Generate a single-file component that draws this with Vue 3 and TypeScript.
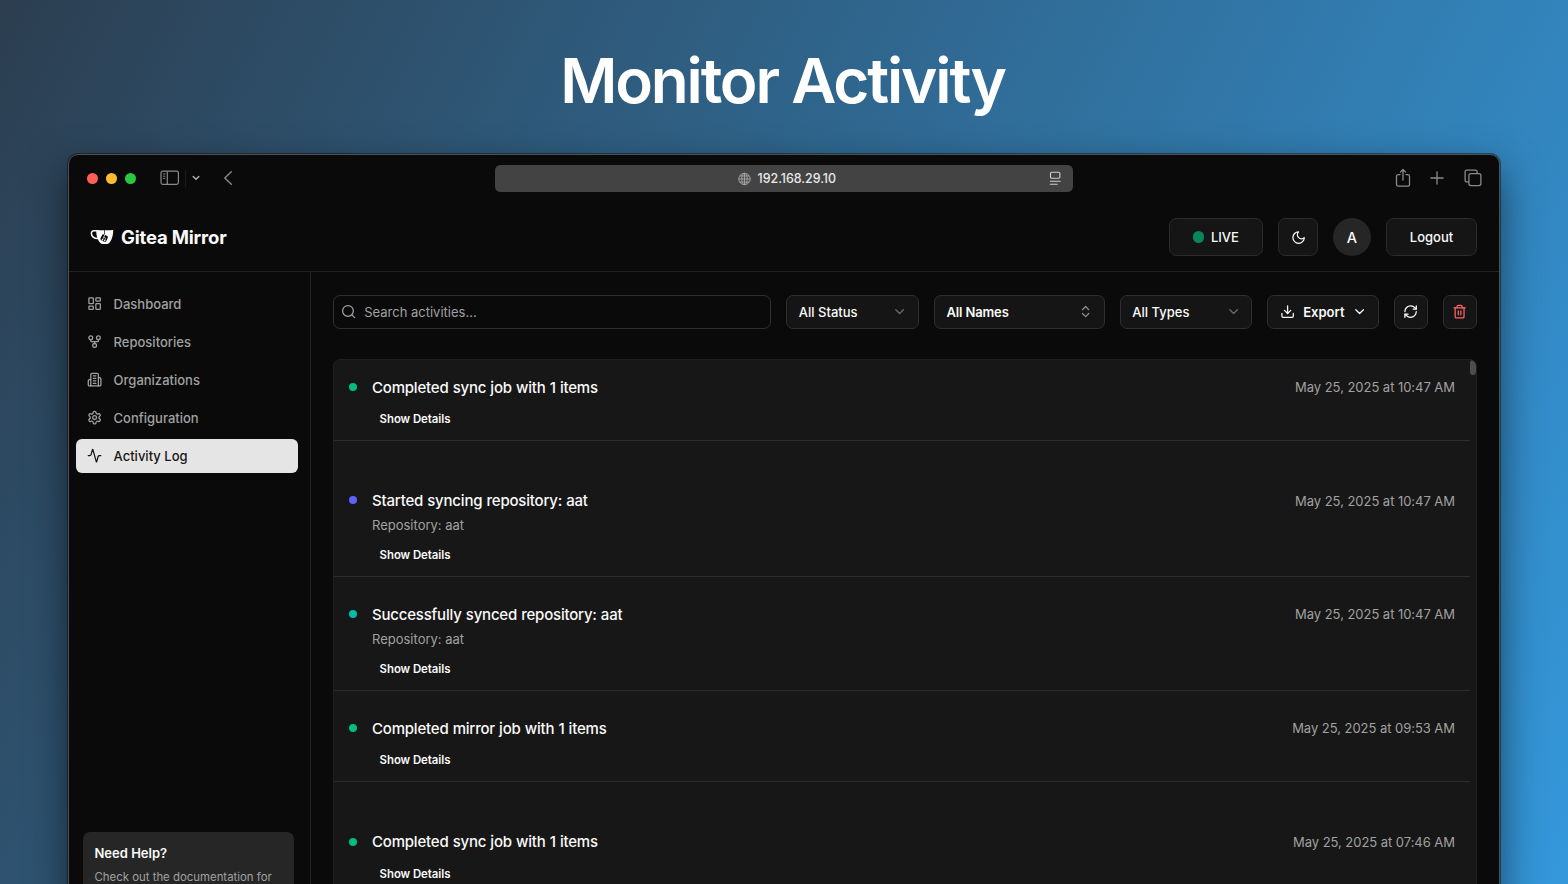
<script setup lang="ts">
interface NavItem {
  label: string
  icon: string
  active?: boolean
}

interface Activity {
  title: string
  repo?: string
  time: string
  tone: 'green' | 'indigo' | 'teal'
}

const icons: Record<string, string> = {
  dashboard:
    '<rect width="7" height="9" x="3" y="3" rx="1"/><rect width="7" height="5" x="14" y="3" rx="1"/><rect width="7" height="9" x="14" y="12" rx="1"/><rect width="7" height="5" x="3" y="16" rx="1"/>',
  fork:
    '<circle cx="12" cy="18" r="3"/><circle cx="6" cy="6" r="3"/><circle cx="18" cy="6" r="3"/><path d="M18 9v2c0 .6-.4 1-1 1H7c-.6 0-1-.4-1-1V9"/><path d="M12 12v3"/>',
  building:
    '<path d="M6 22V4a2 2 0 0 1 2-2h8a2 2 0 0 1 2 2v18Z"/><path d="M6 12H4a2 2 0 0 0-2 2v6a2 2 0 0 0 2 2h2"/><path d="M18 9h2a2 2 0 0 1 2 2v9a2 2 0 0 1-2 2h-2"/><path d="M10 6h4M10 10h4M10 14h4M10 18h4"/>',
  settings:
    '<path d="M12.22 2h-.44a2 2 0 0 0-2 2v.18a2 2 0 0 1-1 1.73l-.43.25a2 2 0 0 1-2 0l-.15-.08a2 2 0 0 0-2.73.73l-.22.38a2 2 0 0 0 .73 2.73l.15.1a2 2 0 0 1 1 1.72v.51a2 2 0 0 1-1 1.74l-.15.09a2 2 0 0 0-.73 2.73l.22.38a2 2 0 0 0 2.73.73l.15-.08a2 2 0 0 1 2 0l.43.25a2 2 0 0 1 1 1.73V20a2 2 0 0 0 2 2h.44a2 2 0 0 0 2-2v-.18a2 2 0 0 1 1-1.73l.43-.25a2 2 0 0 1 2 0l.15.08a2 2 0 0 0 2.73-.73l.22-.39a2 2 0 0 0-.73-2.73l-.15-.08a2 2 0 0 1-1-1.74v-.5a2 2 0 0 1 1-1.74l.15-.09a2 2 0 0 0 .73-2.73l-.22-.38a2 2 0 0 0-2.73-.73l-.15.08a2 2 0 0 1-2 0l-.43-.25a2 2 0 0 1-1-1.73V4a2 2 0 0 0-2-2z"/><circle cx="12" cy="12" r="3"/>',
  activity:
    '<path d="M22 12h-2.48a2 2 0 0 0-1.93 1.46l-2.35 8.36a.25.25 0 0 1-.48 0L9.24 2.18a.25.25 0 0 0-.48 0l-2.35 8.36A2 2 0 0 1 4.49 12H2"/>',
}

const nav: NavItem[] = [
  { label: 'Dashboard', icon: 'dashboard' },
  { label: 'Repositories', icon: 'fork' },
  { label: 'Organizations', icon: 'building' },
  { label: 'Configuration', icon: 'settings' },
  { label: 'Activity Log', icon: 'activity', active: true },
]

const activities: Activity[] = [
  { title: 'Completed sync job with 1 items', time: 'May 25, 2025 at 10:47 AM', tone: 'green' },
  { title: 'Started syncing repository: aat', repo: 'Repository: aat', time: 'May 25, 2025 at 10:47 AM', tone: 'indigo' },
  { title: 'Successfully synced repository: aat', repo: 'Repository: aat', time: 'May 25, 2025 at 10:47 AM', tone: 'teal' },
  { title: 'Completed mirror job with 1 items', time: 'May 25, 2025 at 09:53 AM', tone: 'green' },
  { title: 'Completed sync job with 1 items', time: 'May 25, 2025 at 07:46 AM', tone: 'green' },
]
</script>

<template>
  <div class="stage">
    <h1 class="headline">Monitor Activity</h1>

    <div class="window">
      <div class="chrome">
        <div class="chrome-left">
          <span class="light red"></span>
          <span class="light yellow"></span>
          <span class="light green"></span>
          <svg class="panel-icon" width="20" height="16" viewBox="0 0 20 16" fill="none" stroke="currentColor" stroke-width="1.2">
            <rect x="1" y="1.2" width="17.4" height="13.2" rx="1.8" />
            <path d="M7.3 1.2v13.2" />
            <path d="M2.9 4h2.5M2.9 6.2h2.5M2.9 8.4h2.5" stroke-width="0.9" />
          </svg>
          <span class="chrome-divider"></span>
          <svg class="caret" width="8" height="6" viewBox="0 0 8 6" fill="none" stroke="currentColor" stroke-width="1.4" stroke-linecap="round" stroke-linejoin="round">
            <path d="M1.2 1.5 4 4.2l2.8-2.7" />
          </svg>
          <svg class="back" width="10" height="16" viewBox="0 0 10 16" fill="none" stroke="currentColor" stroke-width="1.4" stroke-linecap="round" stroke-linejoin="round">
            <path d="M8.3 1.8 1.8 8l6.5 6.2" />
          </svg>
        </div>

        <div class="address">
          <span class="address-side"></span>
          <span class="address-text">
            <svg width="13" height="14" viewBox="0 0 13 14" fill="none" stroke="currentColor" stroke-width="0.9">
              <circle cx="6.5" cy="7" r="5.7" />
              <ellipse cx="6.5" cy="7" rx="2.7" ry="5.7" />
              <path d="M6.5 1.3v11.4M.8 7h11.4M1.8 4h9.4M1.8 10h9.4" />
            </svg>
            <span class="host">192.168.29.10</span>
          </span>
          <span class="address-side end">
            <svg width="13" height="15" viewBox="0 0 13 15" fill="none" stroke="currentColor" stroke-width="1.1" stroke-linecap="round">
              <rect x="1.5" y="1.2" width="9.4" height="6" rx="1.2" />
              <path d="M1.4 10.2h9.8M1.4 13.2h6.8" />
            </svg>
          </span>
        </div>

        <div class="chrome-right">
          <svg width="16" height="20" viewBox="0 0 16 20" fill="none" stroke="currentColor" stroke-width="1.3" stroke-linecap="round" stroke-linejoin="round">
            <path d="M5 6.6H3.3A1.8 1.8 0 0 0 1.5 8.4v8A1.8 1.8 0 0 0 3.3 18.2h9.4a1.8 1.8 0 0 0 1.8-1.8v-8a1.8 1.8 0 0 0-1.8-1.8H11" />
            <path d="M8 12V1.6M5.4 4.1 8 1.5l2.6 2.6" />
          </svg>
          <svg width="14" height="14" viewBox="0 0 14 14" fill="none" stroke="currentColor" stroke-width="1.3" stroke-linecap="round">
            <path d="M7 .9v12.2M.9 7h12.2" />
          </svg>
          <svg width="18" height="18" viewBox="0 0 18 18" fill="none" stroke="currentColor" stroke-width="1.3" stroke-linejoin="round">
            <rect x="4.9" y="4.6" width="12" height="12" rx="2" />
            <path d="M4.9 12.8H3a1.9 1.9 0 0 1-1.9-1.9V3A1.9 1.9 0 0 1 3 1.1h8.2A1.9 1.9 0 0 1 13.1 3v1.6" />
          </svg>
        </div>
      </div>

      <header class="topbar">
        <div class="brand">
          <svg class="logo" width="24" height="16" viewBox="0 0 24 16">
            <path d="M7.5 1.7H4.2C2.2 1.7 1.3 2.9 1.4 4.6 1.6 7.5 4 9.4 8 9.5" fill="none" stroke="#fafafa" stroke-width="1.5" />
            <path d="M6.2 .9c5 .4 11.5 .4 17 .1 .1 4.6-1 8.9-3.2 12-1 1.4-2.2 2-3.8 2-2 .1-3.600 0-4.800-.3-1.500-.6-2.500-2.200-3.600-4.600C6.600 7.400 6.200 4.300 6.200 .9Z" fill="#fafafa" />
            <path d="M14.5 1v4.4" stroke="#0a0a0a" stroke-width="0.7" />
            <rect x="11" y="5.9" width="6.3" height="6.3" rx="1.4" transform="rotate(25 14.15 9.05)" fill="#0a0a0a" />
            <path d="M14.9 5.6 12.3 11.4M13.7 8.2c1.9.2 2.1 1.2 1 3.3" fill="none" stroke="#fafafa" stroke-width="0.7" />
            <circle cx="12.5" cy="10.8" r=".75" fill="#fafafa" />
            <circle cx="14.7" cy="11.4" r=".75" fill="#fafafa" />
          </svg>
          <span class="brand-name">Gitea Mirror</span>
        </div>
        <div class="actions">
          <button class="btn live"><span class="live-dot"></span>LIVE</button>
          <button class="btn theme" aria-label="Theme">
            <svg class="icon" viewBox="0 0 24 24"><path d="M12 3a6 6 0 0 0 9 9 9 9 0 1 1-9-9Z" /></svg>
          </button>
          <span class="avatar">A</span>
          <button class="btn logout">Logout</button>
        </div>
      </header>

      <div class="body">
        <aside class="sidebar">
          <nav class="nav">
            <a v-for="item in nav" :key="item.label" class="nav-item" :class="{ active: item.active }">
              <svg class="icon" viewBox="0 0 24 24" v-html="icons[item.icon]"></svg>
              <span>{{ item.label }}</span>
            </a>
          </nav>
          <div class="help">
            <div class="help-title">Need Help?</div>
            <div class="help-text">Check out the documentation for</div>
          </div>
        </aside>

        <main class="main">
          <div class="filters">
            <div class="search">
              <svg class="icon" viewBox="0 0 24 24"><circle cx="11" cy="11" r="8.5" /><path d="m21.5 21.5-4.3-4.3" /></svg>
              <span>Search activities...</span>
            </div>
            <div class="field status">
              <span>All Status</span>
              <svg class="icon faint" viewBox="0 0 24 24"><path d="m6 9 6 6 6-6" /></svg>
            </div>
            <div class="field names">
              <span>All Names</span>
              <svg class="icon dim" viewBox="0 0 24 24"><path d="m7 15 5 5 5-5" /><path d="m7 9 5-5 5 5" /></svg>
            </div>
            <div class="field types">
              <span>All Types</span>
              <svg class="icon faint" viewBox="0 0 24 24"><path d="m6 9 6 6 6-6" /></svg>
            </div>
            <div class="field export">
              <svg class="icon" viewBox="0 0 24 24"><path d="M12 15V3" /><path d="M21 15v4a2 2 0 0 1-2 2H5a2 2 0 0 1-2-2v-4" /><path d="m7 10 5 5 5-5" /></svg>
              <span>Export</span>
              <svg class="icon" viewBox="0 0 24 24"><path d="m6 9 6 6 6-6" /></svg>
            </div>
            <div class="field square">
              <svg class="icon" viewBox="0 0 24 24"><path d="M3 12a9 9 0 0 1 9-9 9.75 9.75 0 0 1 6.74 2.74L21 8" /><path d="M21 3v5h-5" /><path d="M21 12a9 9 0 0 1-9 9 9.75 9.75 0 0 1-6.74-2.74L3 16" /><path d="M8 16H3v5" /></svg>
            </div>
            <div class="field square danger">
              <svg class="icon" viewBox="0 0 24 24"><path d="M3 6h18" /><path d="M19 6v14a2 2 0 0 1-2 2H7a2 2 0 0 1-2-2V6" /><path d="M8 6V4a2 2 0 0 1 2-2h4a2 2 0 0 1 2 2v2" /><path d="M10 11v6M14 11v6" /></svg>
            </div>
          </div>

          <section class="list">
            <div class="slots">
              <div v-for="(a, i) in activities" :key="i" class="slot">
                <article class="row">
                  <span class="dot" :class="a.tone"></span>
                  <div class="row-body">
                    <div class="row-head">
                      <span class="row-title">{{ a.title }}</span>
                      <span class="row-time">{{ a.time }}</span>
                    </div>
                    <div v-if="a.repo" class="row-repo">{{ a.repo }}</div>
                    <button class="details">Show Details</button>
                  </div>
                </article>
              </div>
            </div>
            <div class="scroll"><span class="thumb"></span></div>
          </section>
        </main>
      </div>
    </div>
  </div>
</template>

<style>
body {
  margin: 0;
  overflow: hidden;
}
</style>

<style scoped>
.stage {
  box-sizing: border-box;
  width: 1568px;
  height: 884px;
  overflow: hidden;
  display: flex;
  flex-direction: column;
  align-items: center;
  background: linear-gradient(117deg, #2c3e50 0%, #3498db 100%);
  font-family: Inter, "Liberation Sans", sans-serif;
  color: #fafafa;
}

.stage *,
.stage *::before {
  box-sizing: border-box;
}

.headline {
  margin: 0;
  height: 154px;
  padding-right: 3px;
  line-height: 162px;
  flex: none;
  font-size: 62px;
  font-weight: 600;
  letter-spacing: -2.15px;
  color: #fff;
  white-space: nowrap;
}

.window {
  width: 1432px;
  height: 860px;
  flex: none;
  display: flex;
  flex-direction: column;
  overflow: hidden;
  background: #0a0a0a;
  border: 1px solid #4e5254;
  border-radius: 10px;
  box-shadow: 0 0 0 1px rgba(0, 0, 0, 0.4), 0 17px 40px rgba(0, 0, 0, 0.55);
}

.chrome {
  height: 48px;
  flex: none;
  display: grid;
  grid-template-columns: 1fr 578px 1fr;
  align-items: center;
  padding-bottom: 1px;
}

.chrome-left {
  display: flex;
  align-items: center;
  padding-left: 18px;
  color: #8a8a8a;
}

.chrome-left svg,
.chrome-right svg {
  margin-bottom: 1px;
}

.light {
  width: 11.4px;
  height: 11.4px;
  border-radius: 50%;
  margin-right: 7.6px;
}

.red { background: #ff5f57; }
.yellow { background: #febc2e; }
.light.green { background: #28c840; }

.panel-icon { margin-left: 16.5px; }

.chrome-divider {
  width: 1px;
  height: 17px;
  margin-left: 5px;
  background: #1b1b1b;
}

.caret {
  margin-left: 6px;
  color: #b5b5b5;
}

.back { margin-left: 22.5px; }

.address {
  height: 27px;
  display: flex;
  align-items: center;
  border-radius: 5.5px;
  background: #434343;
  color: #a8a8a8;
}

.address-side {
  flex: 1;
  display: flex;
  padding-right: 11px;
}

.address-side.end {
  justify-content: flex-end;
  color: #d0d0d0;
}

.address-text {
  display: flex;
  align-items: center;
  gap: 7px;
  padding-left: 5.5px;
}

.host {
  font-size: 12.4px;
  font-weight: 500;
  color: #e8e8e8;
}

.chrome-right {
  display: flex;
  align-items: center;
  justify-content: flex-end;
  padding-right: 17px;
  color: #8a8a8a;
}

.chrome-right svg:nth-child(2) { margin: 0 20px 1px 19px; }

.topbar {
  height: 69px;
  flex: none;
  display: flex;
  align-items: center;
  justify-content: space-between;
  padding: 0 22px 0 21px;
  border-bottom: 1px solid #212121;
}

.brand {
  display: flex;
  align-items: center;
  gap: 7px;
}

.brand-name {
  font-size: 18.5px;
  font-weight: 700;
  letter-spacing: -0.18px;
}

.actions {
  display: flex;
  align-items: center;
  gap: 15px;
}

.btn {
  height: 38px;
  display: flex;
  align-items: center;
  justify-content: center;
  padding: 0;
  border: 1px solid #2d2d2d;
  border-radius: 7.5px;
  background: #151515;
  color: #fafafa;
  font-family: inherit;
  font-size: 13px;
  font-weight: 500;
}

.live { width: 94.5px; gap: 7px; }
.theme { width: 40px; }
.theme .icon { margin: 1px 0 0 1px; }
.logout { width: 91px; }

.live-dot {
  width: 11.4px;
  height: 11.4px;
  border-radius: 50%;
  background: #07865e;
}

.avatar {
  width: 38px;
  height: 38px;
  display: grid;
  place-items: center;
  border-radius: 50%;
  background: #262626;
  font-size: 14.5px;
  font-weight: 500;
}

.icon {
  width: 15.2px;
  height: 15.2px;
  flex: none;
  fill: none;
  stroke: currentColor;
  stroke-width: 2;
  stroke-linecap: round;
  stroke-linejoin: round;
}

.body {
  flex: 1;
  min-height: 0;
  display: flex;
}

.sidebar {
  width: 242px;
  flex: none;
  padding-top: 15px;
  border-right: 1px solid #212121;
}

.nav {
  height: 545px;
  display: flex;
  flex-direction: column;
  gap: 4px;
  padding: 0 12px 0 7px;
}

.nav-item {
  height: 34px;
  display: flex;
  align-items: center;
  gap: 11.4px;
  padding-left: 11px;
  border-radius: 6px;
  font-size: 13px;
  font-weight: 500;
  color: #a1a1a1;
}

.nav-item.active {
  background: #e5e5e5;
  color: #171717;
}

.help {
  width: 211px;
  height: 120px;
  margin-left: 14px;
  padding: 12px 11.5px;
  border-radius: 7px;
  background: #262626;
}

.help-title {
  font-size: 13px;
  line-height: 18px;
  font-weight: 600;
}

.help-text {
  margin-top: 8px;
  font-size: 11.4px;
  line-height: 15px;
  color: #a1a1a1;
  white-space: nowrap;
}

.main {
  flex: 1;
  min-width: 0;
  display: flex;
  flex-direction: column;
  gap: 30px;
  padding: 23px 22px 0;
}

.filters {
  display: flex;
  gap: 15.2px;
}

.search,
.field {
  height: 34px;
  display: flex;
  align-items: center;
  border: 1px solid #2f2f2f;
  border-radius: 7px;
  font-size: 13px;
}

.search {
  flex: 1;
  gap: 8px;
  padding-left: 7px;
  color: #a1a1a1;
}

.field {
  justify-content: space-between;
  padding: 0 10.4px 0 11.5px;
  background: #151515;
}

.status,
.types {
  width: 132.4px;
  font-weight: 450;
}

.names {
  width: 170.8px;
  font-weight: 600;
  letter-spacing: -0.12px;
}

.export {
  width: 111.2px;
  padding-left: 12px;
  font-weight: 600;
}

.field.square {
  width: 34px;
  justify-content: center;
  padding: 0;
}

.danger { color: #ff6467; }
.faint { color: #6a6a6a; }
.dim { color: #8f8f8f; }

.list {
  flex: 1;
  min-height: 0;
  display: flex;
  overflow: hidden;
  border: 1px solid #202020;
  border-radius: 7px 7px 0 0;
  background: #171717;
}

.slots {
  flex: 1;
  display: grid;
  grid-auto-rows: 113.7px;
  align-content: start;
  padding-top: 1px;
}

.row {
  display: flex;
  padding: 15px 15px 8px;
  border-bottom: 1px solid #2d2d2d;
}

.dot {
  width: 8px;
  height: 8px;
  flex: none;
  margin: 6.8px 15px 0 0;
  border-radius: 50%;
}

.dot.green { background: #00bc7d; }
.dot.indigo { background: #615fff; }
.dot.teal { background: #00bba7; }

.row-body {
  flex: 1;
  display: flex;
  flex-direction: column;
  align-items: stretch;
}

.row-head {
  display: flex;
  justify-content: space-between;
  line-height: 22.7px;
}

.row-title {
  padding-top: 0.5px;
  height: 22.7px;
  font-size: 15px;
  font-weight: 500;
  letter-spacing: -0.2px;
  word-spacing: 0.35px;
}

.row-time {
  font-size: 13px;
  letter-spacing: -0.04px;
  color: #a1a1a1;
}

.row-repo {
  margin-top: 3.8px;
  font-size: 13px;
  line-height: 18.9px;
  color: #a1a1a1;
}

.details {
  height: 26.5px;
  margin: 6.9px 0 0;
  padding: 0 0 0 7.6px;
  border: 0;
  background: none;
  color: #fafafa;
  font-family: inherit;
  font-size: 11.4px;
  font-weight: 600;
  letter-spacing: -0.05px;
  text-align: left;
}

.scroll {
  width: 6px;
  flex: none;
}

.thumb {
  display: block;
  width: 6px;
  height: 15px;
  border-radius: 3px;
  background: #4d4d4d;
}
</style>
